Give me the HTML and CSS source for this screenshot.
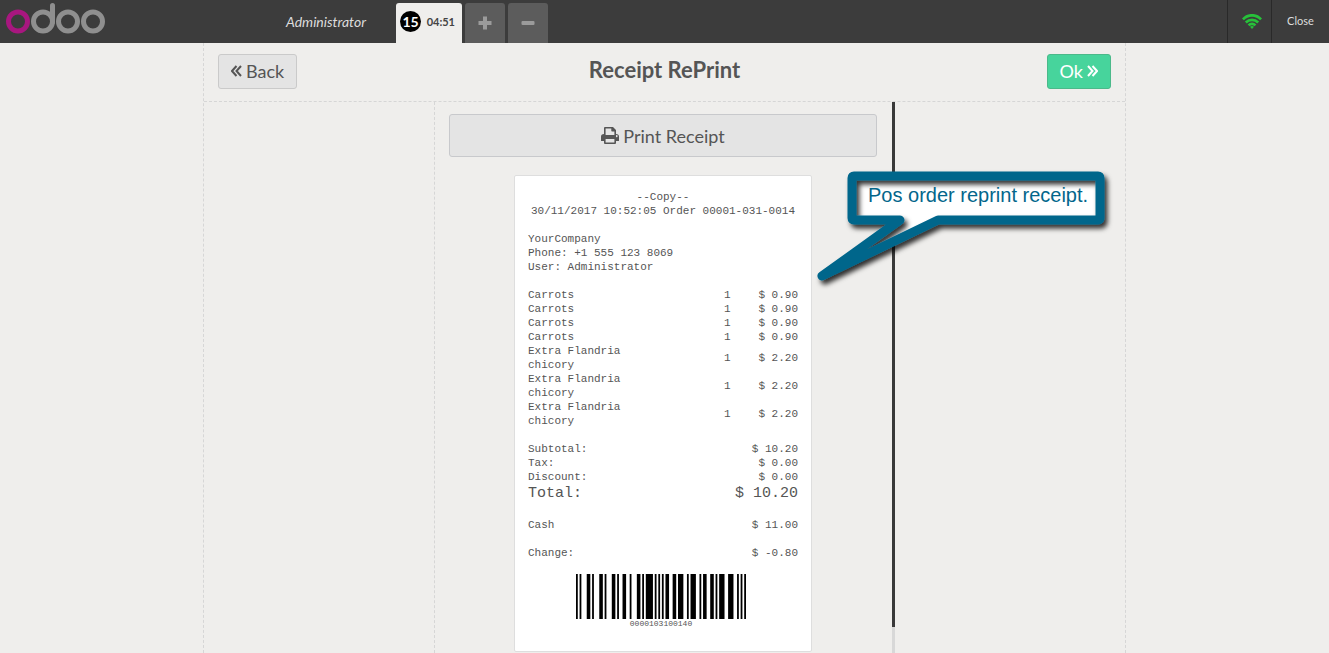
FILE: index.html
```html
<!DOCTYPE html>
<html lang="en">
<head>
<meta charset="utf-8">
<title>Receipt RePrint</title>
<link rel="stylesheet" href="styles.css">
</head>
<body>
<header class="topbar">
  <div class="branding">
    <svg class="logo" viewBox="0 0 100 34" role="img" aria-label="odoo">
      <g fill="none" stroke="#8f8f8f" stroke-width="5">
        <circle cx="12" cy="18.500" r="9.500" stroke="#a8177f"/>
        <circle cx="37" cy="18.500" r="9.500"/>
        <path d="M46.500 19V2.500" stroke-linecap="round"/>
        <circle cx="62" cy="18.500" r="9.500"/>
        <circle cx="87" cy="18.500" r="9.500"/>
      </g>
    </svg>
    <span class="username">Administrator</span>
  </div>
  <nav class="orders" aria-label="Orders">
    <button class="order-tab" type="button"><span class="sequence">15</span><span class="time">04:51</span></button>
    <button class="square" type="button" aria-label="New order"><svg width="14" height="14" viewBox="0 0 14 14"><path d="M5 0.500h4V5h4.500v4H9v4.500H5V9H0.500V5H5z" fill="#9b9b9b"/></svg></button>
    <button class="square" type="button" aria-label="Delete order"><svg width="14" height="14" viewBox="0 0 14 14"><rect x="0.500" y="5" width="13" height="4" rx="1" fill="#9b9b9b"/></svg></button>
  </nav>
  <div class="status">
    <div class="wifi">
      <svg width="20" height="15" viewBox="0 0 20 15" role="img" aria-label="Connected">
        <g fill="none" stroke="#27c13a" stroke-width="2.700">
          <path d="M0.900 5.400C6-0.100 14-0.100 19.100 5.400"/>
          <path d="M3.800 8.500C7.400 4.900 12.600 4.900 16.200 8.500"/>
          <path d="M6.600 11.400C8.500 9.400 11.500 9.400 13.400 11.400"/>
        </g>
        <path d="M10 15l-2-2.200q2-1.400 4 0z" fill="#27c13a"/>
      </svg>
    </div>
    <button class="close" type="button">Close</button>
  </div>
</header>

<main class="screen">
  <div class="heading">
    <button class="btn back" type="button"><svg class="chevrons" viewBox="0 0 11 12"><path d="M5.500 1L1 6l4.500 5M10 1L5.500 6l4.500 5"/></svg>Back</button>
    <h1>Receipt RePrint</h1>
    <button class="btn ok" type="button">Ok<svg class="chevrons" viewBox="0 0 11 12"><path d="M1 1l4.500 5L1 11M5.500 1L10 6l-4.500 5"/></svg></button>
  </div>
  <div class="columns">
    <div class="side"></div>
    <section class="center">
      <button class="print" type="button">
        <svg width="18" height="17" viewBox="0 0 18 17"><path fill="#555" fill-rule="evenodd" d="M3 1q0-1 1-1h8l3 3v4q3 0 3 2.500v4q0 .5-.5.500H15v2q0 1-1 1H4q-1 0-1-1v-2H.500Q0 14 0 13.500v-4Q0 7 3 7zM4.600 1.600V8h8.800V4.500H11q-.7 0-.7-.7V1.600zM4.600 12v3.400h8.800V12zM15 9.200a.8.800 0 1 0 1.500 0a.8.800 0 1 0-1.500 0"/></svg>Print Receipt</button>
      <article class="receipt">
        <p class="meta">--Copy--<br>30/11/2017 10:52:05 Order 00001-031-0014</p>
        <p>YourCompany<br>Phone: +1 555 123 8069<br>User: Administrator</p>
        <table class="lines">
          <tbody>
            <tr><td class="name">Carrots</td><td class="qty">1</td><td class="amount">$ 0.90</td></tr>
            <tr><td class="name">Carrots</td><td class="qty">1</td><td class="amount">$ 0.90</td></tr>
            <tr><td class="name">Carrots</td><td class="qty">1</td><td class="amount">$ 0.90</td></tr>
            <tr><td class="name">Carrots</td><td class="qty">1</td><td class="amount">$ 0.90</td></tr>
            <tr><td class="name">Extra Flandria chicory</td><td class="qty">1</td><td class="amount">$ 2.20</td></tr>
            <tr><td class="name">Extra Flandria chicory</td><td class="qty">1</td><td class="amount">$ 2.20</td></tr>
            <tr><td class="name">Extra Flandria chicory</td><td class="qty">1</td><td class="amount">$ 2.20</td></tr>
          </tbody>
        </table>
        <table>
          <tbody>
            <tr><td>Subtotal:</td><td class="amount">$ 10.20</td></tr>
            <tr><td>Tax:</td><td class="amount">$ 0.00</td></tr>
            <tr><td>Discount:</td><td class="amount">$ 0.00</td></tr>
            <tr class="total"><td>Total:</td><td class="amount">$ 10.20</td></tr>
          </tbody>
        </table>
        <table>
          <tbody><tr><td>Cash</td><td class="amount">$ 11.00</td></tr></tbody>
        </table>
        <table>
          <tbody><tr><td>Change:</td><td class="amount">$ -0.80</td></tr></tbody>
        </table>
        <figure class="barcode">
          <svg viewBox="0 0 95 45" preserveAspectRatio="none" aria-hidden="true"><path d="M0 0h1v45h-1zM2 0h1v45h-1zM6 0h2v45h-2zM9 0h1v45h-1zM13 0h2v45h-2zM16 0h1v45h-1zM20 0h2v45h-2zM23 0h1v45h-1zM26 0h2v45h-2zM30 0h1v45h-1zM34 0h2v45h-2zM37 0h1v45h-1zM39 0h4v45h-4zM44 0h1v45h-1zM46 0h1v45h-1zM48 0h1v45h-1zM50 0h2v45h-2zM54 0h2v45h-2zM57 0h3v45h-3zM62 0h1v45h-1zM64 0h3v45h-3zM69 0h1v45h-1zM71 0h2v45h-2zM75 0h2v45h-2zM78 0h1v45h-1zM80 0h3v45h-3zM85 0h3v45h-3zM90 0h1v45h-1zM92 0h1v45h-1zM94 0h1v45h-1z"/></svg>
          <figcaption>0000103100140</figcaption>
        </figure>
      </article>
      <div class="scrollbar"></div>
    </section>
    <div class="side"></div>
  </div>
  <aside class="callout">
    <svg class="bubble" width="310" height="130" viewBox="0 0 310 130" aria-hidden="true">
      <defs>
        <filter id="shadow" x="-10%" y="-10%" width="125%" height="130%"><feDropShadow dx="3" dy="4" stdDeviation="2.500" flood-color="#000" flood-opacity="0.800"/></filter>
      </defs>
      <path d="M44 16H290V59H129L13 115L91 59H44z" fill="#fff"/>
      <path d="M45 15H289Q291 15 291 17V57Q291 59 289 59H129L13 115L91 59H45Q43 59 43 57V17Q43 15 45 15z" fill="none" stroke="#03668b" stroke-width="9" stroke-linejoin="round" filter="url(#shadow)"/>
    </svg>
    <p>Pos order reprint receipt.</p>
  </aside>
</main>
</body>
</html>
```
FILE: styles.css
```css
* { box-sizing: border-box; }

body {
  margin: 0;
  height: 100vh;
  display: flex;
  flex-direction: column;
  overflow: hidden;
  background: #efeeec;
  color: #555;
  font-family: Lato, "Liberation Sans", sans-serif;
}

button { font-family: inherit; color: inherit; margin: 0; cursor: pointer; }
svg { display: block; }

.topbar {
  display: flex;
  flex: none;
  height: 43px;
  background: #3c3c3c;
  color: #ddd;
}

.branding {
  display: flex;
  align-items: center;
  justify-content: space-between;
  width: 396px;
  padding: 0 30px 0 6px;
}
.logo { width: 100px; height: 34px; margin-bottom: 4px; }
.username { font-size: 14px; font-style: italic; }

.orders { display: flex; flex: 1; gap: 3px; padding-top: 3px; }
.order-tab {
  display: flex;
  align-items: center;
  justify-content: space-between;
  width: 66px;
  padding: 0 7px 3px 4px;
  border: 0;
  border-radius: 3px 3px 0 0;
  background: #efeeec;
  color: #444;
  font-weight: bold;
}
.sequence {
  width: 21px;
  height: 21px;
  border-radius: 50%;
  background: #000;
  color: #fff;
  font-size: 14px;
  line-height: 21px;
  text-align: center;
}
.time { font-size: 11px; }
.square {
  display: grid;
  place-items: center;
  width: 40px;
  padding: 0;
  border: 0;
  border-radius: 3px 3px 0 0;
  background: #5c5c5c;
}

.status { display: flex; }
.wifi {
  display: grid;
  place-items: center;
  width: 44px;
  padding-left: 4px;
  border-left: 1px solid #292929;
}
.close {
  width: 58px;
  padding: 0 0 2px;
  border: 0;
  border-left: 1px solid #292929;
  background: none;
  font-size: 11px;
}

.screen {
  position: relative;
  display: flex;
  flex: 1;
  flex-direction: column;
  width: 100%;
  min-height: 0;
  max-width: 923px;
  margin: 0 auto;
  border: dashed #d6d6d6;
  border-width: 0 1px;
}

.heading {
  display: grid;
  grid-template-columns: 1fr auto 1fr;
  align-items: center;
  flex: none;
  height: 59px;
  padding: 0 14px 2px;
  border-bottom: 1px dashed #d6d6d6;
}
.heading h1 { margin: 0; padding-bottom: 2px; font-size: 22px; line-height: 28px; }

.btn {
  display: flex;
  align-items: center;
  gap: 4px;
  height: 35px;
  padding: 0 12px;
  border: 1px solid #cacaca;
  border-radius: 3px;
  background: #e4e4e4;
  font-size: 18px;
}
.back { justify-self: start; }
.ok {
  justify-self: end;
  border-color: #4bb98a;
  background: #47d49c;
  color: #fff;
}
.chevrons {
  width: 11px;
  height: 12px;
  fill: none;
  stroke: currentColor;
  stroke-width: 2;
}

.columns {
  display: grid;
  grid-template-columns: 1fr 2fr 1fr;
  flex: 1;
  min-height: 0;
}
.center {
  position: relative;
  min-height: 0;
  padding: 12px 18px 0 14px;
  border-left: 1px dashed #d6d6d6;
  overflow: hidden;
}
.scrollbar {
  position: absolute;
  top: 0;
  right: 0;
  bottom: 0;
  width: 3px;
  background: linear-gradient(#393939 0 525px, #d8d8d8 525px);
}
.print {
  display: flex;
  align-items: center;
  justify-content: center;
  gap: 4px;
  width: 100%;
  height: 43px;
  border: 1px solid #c8c9cc;
  border-radius: 3px;
  background: #e4e4e4;
  font-size: 18px;
}

.receipt {
  width: 298px;
  margin: 18px auto 0;
  padding: 14px 13px 22px;
  border: 1px solid #dedede;
  border-radius: 2px;
  background: #fff;
  font-family: "Liberation Mono", monospace;
  font-size: 11px;
  line-height: 14px;
}
.receipt p { margin: 0 0 14px; }
.receipt .meta { text-align: center; }
.receipt table {
  width: 100%;
  margin-bottom: 14px;
  border-collapse: collapse;
}
.receipt td { padding: 0; }
.lines .name { width: 50%; padding-right: 30px; }
.lines .qty { width: 25%; text-align: right; }
.receipt .amount { text-align: right; }
.receipt .total { font-size: 15px; line-height: 20px; }

.receipt .barcode { width: 170px; margin: 0 0 0 48px; }
.barcode svg { width: 100%; height: 45px; }
.barcode figcaption { font-size: 8px; line-height: 10px; text-align: center; }

.callout {
  position: absolute;
  top: 118px;
  left: 605px;
  width: 310px;
}
.callout p {
  position: absolute;
  top: 22px;
  left: 59px;
  margin: 0;
  color: #03668b;
  font-family: "Liberation Sans", Arial, sans-serif;
  font-size: 20px;
  line-height: 24px;
  white-space: nowrap;
}
```
